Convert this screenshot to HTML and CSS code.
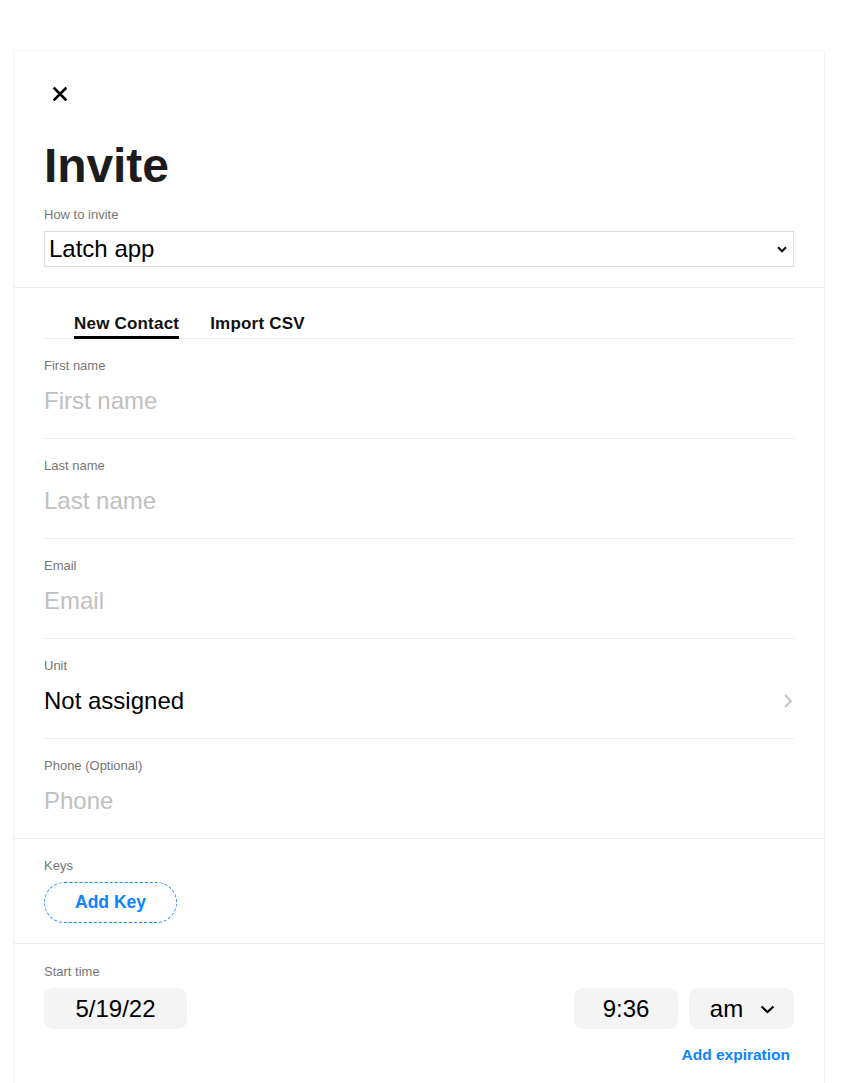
FILE: index.html
```html
<!DOCTYPE html>
<html lang="en">
<head>
<meta charset="utf-8">
<title>Invite</title>
<link rel="stylesheet" href="styles.css">
</head>
<body>
<div class="panel">
  <section class="head">
    <button class="close" aria-label="Close">
      <svg width="14" height="14" viewBox="0 0 14 14"><path d="M1.5 1.5 L12.5 12.5 M12.5 1.5 L1.5 12.5" stroke="#000" stroke-width="2.6" stroke-linecap="square" fill="none"/></svg>
    </button>
    <h1 class="title">Invite</h1>
    <div class="label">How to invite</div>
    <div class="select">
      <span>Latch app</span>
      <svg class="select-chev" width="10" height="7" viewBox="0 0 10 7"><path d="M1 1.2 L5 5.2 L9 1.2" stroke="#111" stroke-width="2.2" fill="none"/></svg>
    </div>
  </section>

  <section class="contact">
    <div class="tabs">
      <div class="tab active">New Contact</div>
      <div class="tab">Import CSV</div>
    </div>
    <div class="field">
      <div class="label">First name</div>
      <input class="input" type="text" placeholder="First name">
    </div>
    <div class="field">
      <div class="label">Last name</div>
      <input class="input" type="text" placeholder="Last name">
    </div>
    <div class="field">
      <div class="label">Email</div>
      <input class="input" type="text" placeholder="Email">
    </div>
    <div class="field">
      <div class="label">Unit</div>
      <div class="unit-row">
        <span class="value">Not assigned</span>
        <svg width="10" height="16" viewBox="0 0 10 16"><path d="M2 2 L8 8 L2 14" stroke="#c8c8c8" stroke-width="2.2" fill="none"/></svg>
      </div>
    </div>
    <div class="field last">
      <div class="label">Phone (Optional)</div>
      <input class="input" type="text" placeholder="Phone">
    </div>
  </section>

  <section class="keys">
    <div class="label">Keys</div>
    <button class="add-key">Add Key</button>
  </section>

  <section class="start">
    <div class="label">Start time</div>
    <div class="time-row">
      <div class="box date">5/19/22</div>
      <div class="time-right">
        <div class="box time">9:36</div>
        <div class="box ampm">am
          <svg width="15" height="9" viewBox="0 0 15 9"><path d="M1.5 1.5 L7.5 7 L13.5 1.5" stroke="#000" stroke-width="2.2" fill="none"/></svg>
        </div>
      </div>
    </div>
    <div class="expire-row"><a class="expire" href="#">Add expiration</a></div>
  </section>
</div>
</body>
</html>
```

FILE: styles.css
```css
* { box-sizing: border-box; }
html, body { margin: 0; padding: 0; background: #fff; }
body {
  font-family: "Liberation Sans", Arial, Helvetica, sans-serif;
  color: #000;
}
.panel {
  margin: 50px 0 0 13px;
  width: 812px;
  min-height: 1100px;
  border-left: 1px solid #f1f1f1;
  border-right: 1px solid #f1f1f1;
  border-top: 1px solid #f8f8f8;
}
section { padding: 0 30px; }
.head {
  padding-top: 36px;
  padding-bottom: 20px;
  border-bottom: 1px solid #eeeeee;
}
.close {
  display: block;
  margin: 0 0 0 9px;
  padding: 0;
  border: 0;
  background: none;
  width: 14px;
  height: 14px;
  line-height: 0;
}
.title {
  margin: 37px 0 0;
  font-size: 48px;
  line-height: 56px;
  font-weight: 700;
  color: #1c1c1c;
  letter-spacing: -0.1px;
}
.label {
  font-size: 13px;
  line-height: 16px;
  color: #767676;
}
.head .label { margin-top: 13px; }
.select {
  margin-top: 8px;
  height: 36px;
  border: 1px solid #dcdcdc;
  display: flex;
  align-items: center;
  justify-content: space-between;
  padding: 0 6px 0 4px;
  font-size: 24px;
  color: #000;
}
.select-chev { margin-top: 1px; }

.contact { padding-bottom: 0; border-bottom: 1px solid #eeeeee; }
.tabs {
  display: flex;
  gap: 31px;
  padding: 26px 0 0 30px;
  border-bottom: 1px solid #eeeeee;
}
.tab {
  font-size: 17px;
  line-height: 20px;
  font-weight: 700;
  letter-spacing: 0.2px;
  padding-bottom: 2px;
  border-bottom: 3px solid transparent;
  margin-bottom: -1px;
  color: #111;
}
.tab.active { border-bottom-color: #000; }
.field {
  padding: 19px 0 23px;
  border-bottom: 1px solid #eeeeee;
}
.field.last { border-bottom: 0; }
.field .label { margin-bottom: 13px; }
.input {
  display: block;
  width: 100%;
  border: 0;
  outline: none;
  padding: 0;
  margin: 0;
  height: 28px;
  font-family: inherit;
  font-size: 24px;
  line-height: 28px;
  color: #000;
  background: transparent;
}
.input::placeholder { color: #c0c0c0; opacity: 1; }
.unit-row {
  display: flex;
  align-items: center;
  justify-content: space-between;
  height: 28px;
  padding-right: 1px;
}
.value { font-size: 24px; line-height: 28px; }

.keys {
  padding-top: 19px;
  padding-bottom: 20px;
  border-bottom: 1px solid #eeeeee;
}
.add-key {
  display: block;
  margin-top: 8px;
  width: 133px;
  height: 41px;
  border: 1px dashed #1f8cff;
  border-radius: 21px;
  background: #fff;
  color: #0a84ff;
  font-family: inherit;
  font-weight: 700;
  font-size: 17.5px;
  padding: 0;
}

.start { padding-top: 20px; }
.time-row {
  margin-top: 8px;
  display: flex;
  justify-content: space-between;
}
.time-right { display: flex; gap: 11px; }
.box {
  height: 41px;
  background: #f4f4f4;
  border-radius: 9px;
  display: flex;
  align-items: center;
  justify-content: center;
  font-size: 24px;
  color: #000;
}
.date { width: 143px; }
.time { width: 104px; }
.ampm { width: 105px; gap: 17px; padding-left: 2px; }
.ampm svg { margin-top: 1px; }
.expire-row {
  display: flex;
  justify-content: flex-end;
  padding: 15px 4px 0 0;
}
.expire {
  color: #0a84ff;
  font-size: 15.5px;
  line-height: 22px;
  font-weight: 700;
  text-decoration: none;
}
```
